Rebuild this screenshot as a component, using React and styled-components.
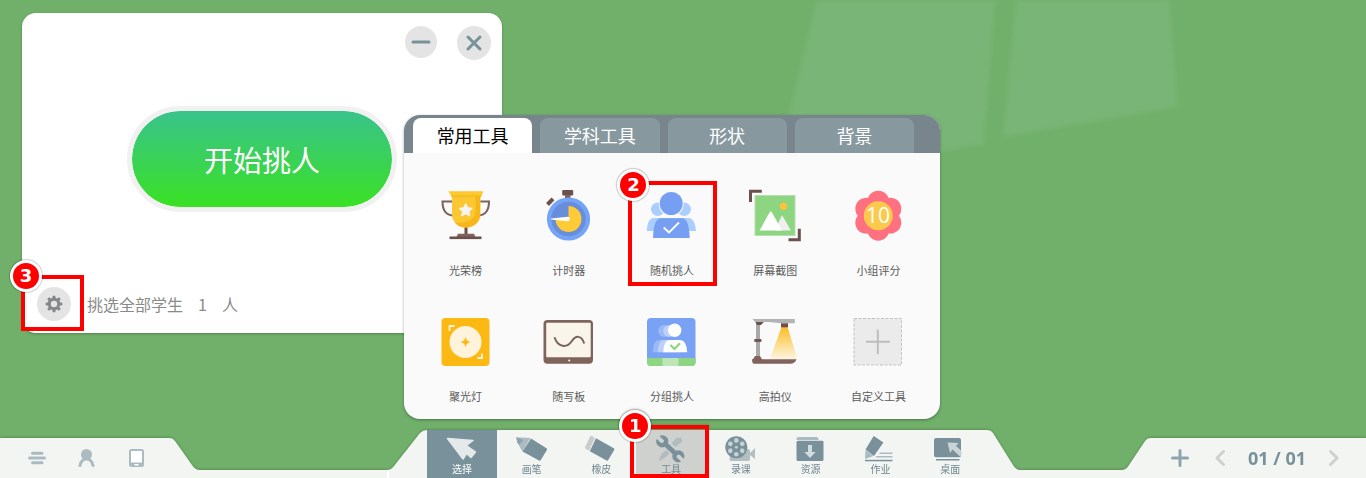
import React from "react";

import styled, { createGlobalStyle, css } from "styled-components";

const GlobalStyle = createGlobalStyle`
  :root {
    --board: #71b06b;
    --dock: #f3f5f2;
    --slate: #78919a;
    --slateLight: #abbbc1;
    --mark: #ff0000;
  }

  * {
    box-sizing: border-box;
  }

  body {
    margin: 0;
    font-family: "Noto Sans CJK SC", sans-serif;
  }

  button {
    border: 0;
    padding: 0;
    background: none;
    font: inherit;
    color: inherit;
    cursor: pointer;
  }

  svg {
    display: block;
  }
`;

const Page = styled.div`
  display: flex;
  flex-direction: column;
  min-height: 100vh;
  position: relative;
  overflow: hidden;
  background-color: var(--board);
`;

const Glare = styled.svg`
  position: absolute;
  top: 0;
  left: 780px;
  filter: blur(2px);
`;

const Canvas = styled.main`
  flex: 1;
  position: relative;
  min-height: 430px;
`;

/* numbered red frame laid over a control */
const Frame = styled.span`
  position: absolute;
  inset: ${(props) => props.$inset};
  border: 4px solid var(--mark);
  pointer-events: none;
`;

const Badge = styled.span`
  position: absolute;
  top: ${(props) => props.$top};
  left: -15px;
  display: flex;
  align-items: center;
  justify-content: center;
  width: 32px;
  height: 32px;
  border: 3px solid #fff;
  border-radius: 50%;
  background: var(--mark);
  box-shadow: 0 0 1px 1px rgba(0, 0, 0, 0.2);
  color: #fff;
  font: bold 18px/24px "DejaVu Sans", sans-serif;
`;

const Mark = ({ number, inset, top }) => (
  <Frame $inset={inset}>
    <Badge $top={top}>{number}</Badge>
  </Frame>
);

/* ---------- student picker window ---------- */

const Picker = styled.section`
  position: absolute;
  top: 13px;
  left: 22px;
  display: flex;
  flex-direction: column;
  width: 480px;
  height: 320px;
  padding: 13px 11px 12px 15px;
  border-radius: 14px;
  background: #fff;
  box-shadow: 0 1px 3px rgba(0, 0, 0, 0.25);
`;

const PickerHeader = styled.header`
  display: flex;
  justify-content: flex-end;
  gap: 20px;
`;

const RoundButton = styled.button`
  display: flex;
  align-items: center;
  justify-content: center;
  position: relative;
  width: ${(props) => props.$size || 34}px;
  height: ${(props) => props.$size || 34}px;
  border-radius: 50%;
  background: #e4e4e4;
`;

const PickerBody = styled.div`
  display: flex;
  flex: 1;
  align-items: center;
  justify-content: center;
  padding: 0 4px 30px 0;
`;

const StartButton = styled.button`
  width: 270px;
  height: 106px;
  border: 5px solid #f1f1f1;
  border-radius: 53px;
  background: linear-gradient(#39c38c, #3ae123) padding-box;
  color: #fff;
  font-size: 29px;
  line-height: 94px;
`;

const PickerFooter = styled.footer`
  display: flex;
  align-items: center;
  color: #8a8a8a;
  font-size: 16px;
`;

const Summary = styled.p`
  display: flex;
  gap: 15px;
  margin: 0 0 0 16px;
`;

/* ---------- toolbox ---------- */

const Toolbox = styled.section`
  position: absolute;
  top: 115px;
  left: 404px;
  width: 536px;
  border-radius: 16px;
  background: #fafafa;
  box-shadow: 0 1px 3px rgba(0, 0, 0, 0.35);
`;

const Tabs = styled.div`
  display: flex;
  gap: 8px;
  padding: 3px 26px 0 9px;
  border-radius: 16px 16px 0 0;
  background: #78858d;
`;

const Tab = styled.button`
  flex: 1;
  height: 35px;
  border-radius: 8px 8px 0 0;
  background: #87989f;
  color: #fff;
  font-size: 18px;
  line-height: 35px;

  ${(props) =>
    props.$active &&
    css`
      background: #fff;
      color: #000;
    `}
`;

const ToolGrid = styled.div`
  display: grid;
  grid-template-columns: repeat(5, 1fr);
  row-gap: 35px;
  padding: 34px 10px 15px;
`;

const Tool = styled.button`
  display: flex;
  flex-direction: column;
  align-items: center;
  gap: 19px;
  position: relative;
  color: #5a5a5a;
  font-size: 11px;
  line-height: 16px;
`;

/* ---------- dock ---------- */

const Dock = styled.footer`
  display: grid;
  grid-template-columns: 1fr auto 1fr;
  align-items: end;
  position: relative;
  background: linear-gradient(var(--dock), var(--dock)) bottom / 100% 8px
    no-repeat;
  filter: drop-shadow(0 -1px 1px rgba(0, 0, 0, 0.18));
`;

const DockSide = styled.div`
  display: flex;
  align-items: center;
  justify-self: ${(props) => props.$side};
  height: 40px;

  &::before,
  &::after {
    height: 40px;
    background: var(--dock);
  }
`;

const DockLeft = styled(DockSide)`
  &::after {
    content: "";
    width: 32px;
    clip-path: path("M0 0H2Q5 0 7 3L24 27Q27 32 32 32V40H0Z");
  }
`;

const DockRight = styled(DockSide)`
  &::before {
    content: "";
    width: 28px;
    clip-path: path("M28 0Q25 0 23 3L7 27Q4 32 0 32V40H28Z");
  }
`;

const DockItems = styled.div`
  display: flex;
  align-items: center;
  height: 100%;
  padding: 0 ${(props) => props.$right} 0 ${(props) => props.$left};
  background: var(--dock);
`;

const DockButton = styled.button`
  display: flex;
  align-items: center;
  justify-content: center;
  width: ${(props) => props.$width};
  height: 40px;
`;

const PageNumber = styled.span`
  margin: 0 8px;
  color: #78919a;
  font: 700 18px/24px "Open Sans", sans-serif;
  white-space: nowrap;
`;

const DockCenter = styled.nav`
  display: flex;
  margin-left: 41px;

  &::before {
    content: "";
    width: 40px;
    background: linear-gradient(90deg, #fff 0 2px, var(--dock) 2px);
    clip-path: path("M40 0Q36 0 33 3L7 36Q4 40 0 40V48H40Z");
  }

  &::after {
    content: "";
    width: 35px;
    background: var(--dock);
    clip-path: path("M0 0H2Q6 0 8 3L28 35Q31 40 35 40V48H0Z");
  }
`;

const DockTools = styled.div`
  display: grid;
  grid-template-columns: repeat(8, 1fr);
  width: 558px;
  height: 48px;
  background: var(--dock);
`;

const DockTool = styled.button`
  display: flex;
  flex-direction: column;
  align-items: center;
  position: relative;
  padding-top: 5px;
  background: ${(props) => props.$background || "none"};
  color: ${(props) => props.$color || "#6f8790"};
  font-size: 10px;
  line-height: 12px;
`;

/* ---------- toolbox drawings ---------- */

const Art = ({ children }) => (
  <svg width="56" height="56" viewBox="0 0 56 56" fill="none" aria-hidden="true">
    {children}
  </svg>
);

const Trophy = () => (
  <Art>
    <g stroke="#7a625f" strokeWidth="2">
      <path d="M14 14.5H4.5C4.5 22 7 28 15 28.5" />
      <path d="M42 14.5H51C51 22 48.500 28 40.500 28.500" />
    </g>
    <path d="M28 39V48" stroke="#6b514d" strokeWidth="3" />
    <path d="M10.500 4.500H45L42.500 9V27C42.500 35 36 40.500 28 40.500S14 35 14 27V9.500Z" fill="#fbc834" />
    <path d="M37.500 9H42V27C42 35 36 40.500 28 40.500C23 40.500 19 38.500 17 35.500C30 37 37.500 31 37.500 24Z" fill="#f7b718" />
    <path d="M10.500 4.500H45L43.500 9.500H14Z" fill="#fcc92f" />
    <path d="M13 9.200H43" stroke="#f3b21c" />
    <path d="M27.700 16.500L29.800 20.700L34.300 21.300L31 24.500L31.800 29L27.700 26.900L23.600 29L24.400 24.500L21.100 21.300L25.600 20.700Z" fill="#f4f4f2" stroke="#f4f4f2" strokeLinejoin="round" />
    <path d="M20 46.700H36L37.500 50H18.500Z" fill="#81625d" />
    <rect x="11.500" y="49.500" width="32" height="2.600" fill="#6b514d" />
  </Art>
);

const Timer = () => (
  <Art>
    <path d="M6.500 17.500L12 11.800" stroke="#6b514d" strokeWidth="4" />
    <rect x="21.200" y="3" width="11" height="5.500" rx="1" fill="#6b514d" />
    <rect x="24" y="8" width="5.500" height="4" fill="#81625d" />
    <circle cx="27.500" cy="32" r="21.600" fill="#74a4f7" />
    <circle cx="27.500" cy="32" r="17.300" fill="#678ddb" />
    <path d="M27.500 19A13 13 0 1 1 14.500 32H27.500Z" fill="#fecb36" />
    <path d="M10 31.400L26.500 29.700A2.300 2.300 0 0 1 26.500 34.300L10 32.600Z" fill="#fff" />
  </Art>
);

const RandomPick = () => (
  <Art>
    <g fill="#aaceff">
      <circle cx="13.700" cy="22.300" r="6.700" />
      <circle cx="40.200" cy="22.300" r="6.700" />
      <path d="M2.700 44Q3.500 31 10 31H44Q51 31 52 44Z" />
    </g>
    <circle cx="27.200" cy="16.700" r="12.400" fill="#fafafa" />
    <circle cx="27.200" cy="16.500" r="11.500" fill="#769ff3" />
    <path d="M9 51Q9.500 31.300 17 31.300H38Q45 31.300 45.700 51Z" fill="#769ff3" />
    <path d="M19.700 40.500L25 45.500L35 35.500" stroke="#fff" strokeWidth="1.800" />
  </Art>
);

const Screenshot = () => (
  <Art>
    <path d="M3.500 15V4.300H14.800M52.300 41.700V52.700H41.500" stroke="#6b514d" strokeWidth="3" />
    <rect x="8" y="8.500" width="40" height="40" fill="#8dd581" stroke="#b5dfad" />
    <circle cx="36.500" cy="19.300" r="3.700" fill="#fcc338" />
    <path d="M28 43.500L35 28L44 43.500Z" fill="#efefef" />
    <path d="M12.500 43.500L22.500 25.500Q23.800 23.500 25 25.500L35 43.500Z" fill="#fff" />
  </Art>
);

const Score = () => (
  <Art>
    <g fill="#ff7080">
      {[0, 60, 120, 180, 240, 300].map((angle) => (
        <circle key={angle} cx="28.300" cy="14.500" r="10.800" transform={`rotate(${angle} 28.300 28.700)`} />
      ))}
      <circle cx="28.300" cy="28.700" r="15" />
    </g>
    <circle cx="28.300" cy="28.700" r="14.500" fill="#fbca4b" />
    <text x="28" y="36" fill="#fff" fontFamily="Liberation Sans Narrow, Open Sans, sans-serif" fontSize="21" fontWeight="400" textAnchor="middle">
      10
    </text>
  </Art>
);

const Spotlight = () => (
  <Art>
    <rect x="3.500" y="5" width="48" height="48" rx="4" fill="#fcb813" />
    <circle cx="27.500" cy="29" r="16" fill="#fff3db" />
    <path d="M27.500 23.500Q28 28.500 33 29Q28 29.500 27.500 34.500Q27 29.500 22 29Q27 28.500 27.500 23.500Z" fill="#fcb813" />
    <path d="M11.500 18V13H16.500M44 40.500V45H39.500" stroke="#fff3db" strokeWidth="1.800" />
  </Art>
);

const Board = () => (
  <Art>
    <rect x="2.500" y="7" width="49.500" height="43.700" rx="4" fill="#7e645b" />
    <rect x="5.200" y="9.700" width="44.500" height="34.600" rx="1" fill="#f9f5eb" />
    <path d="M13.500 24.300C17 35 26 35 30.500 28.500S40.500 22 43.200 30.500" stroke="#7a625f" strokeWidth="2" />
    <circle cx="28.200" cy="47.400" r="1" fill="#fff" />
  </Art>
);

const personBody = "M19.300 39.300Q19.500 27 26 27H36Q42.500 27 43.200 39.300Z";

const GroupPick = () => (
  <Art>
    <rect x="3" y="5" width="48.500" height="48" rx="4" fill="#79a2f4" />
    <path d="M3 45H51.500V49A4 4 0 0 1 47.500 53H7A4 4 0 0 1 3 49Z" fill="#8dd581" />
    <rect x="18.500" y="45" width="16" height="8" fill="#bde6b5" />
    {[-10.5, -5.5].map((shift, index) => (
      <g key={shift} fill={index ? "#bdd0f9" : "#9bb9f7"} transform={`translate(${shift} 0)`}>
        <circle cx="30.700" cy="18" r="6" />
        <path d={personBody} />
      </g>
    ))}
    <circle cx="30.700" cy="17.300" r="6.700" fill="#fff" />
    <path d={personBody} fill="#fff" />
    <path d="M26.500 32L30.500 36L36 30.300" stroke="#8dd581" strokeWidth="2.200" />
  </Art>
);

const Visualizer = () => (
  <Art>
    <defs>
      <linearGradient id="beam" x1="0" y1="0" x2="0" y2="1">
        <stop offset="0" stopColor="#fdbd24" />
        <stop offset="1" stopColor="#fef6e4" />
      </linearGradient>
    </defs>
    <path d="M34.500 14H40.500L50.500 46.300H23Z" fill="url(#beam)" />
    <rect x="9" y="9" width="4" height="35" fill="#a9a9a9" />
    <path d="M5.500 6H47.800V10.300H34L22 9H8Z" fill="#b3b3b3" />
    <path d="M8.500 9H16.800L14 12H10Z" fill="#6b514d" />
    <rect x="7.200" y="26" width="7.300" height="3" rx="1" fill="#6b5a57" />
    <path d="M8 43H13L15.500 47H5.500Z" fill="#81625d" />
    <rect x="34" y="10.300" width="7" height="4" fill="#6b514d" />
    <path d="M5 46.300H49.500Q48 50.700 43 50.700H7Q5 50.700 5 46.300Z" fill="#81625d" />
  </Art>
);

const Custom = () => (
  <Art>
    <rect x="4" y="5.500" width="47.500" height="46.500" fill="#ebebeb" stroke="#c3c3c3" strokeDasharray="3 1.500" />
    <path d="M16 28.700H40M27.800 16.500V41" stroke="#bdbdbd" strokeWidth="2" />
  </Art>
);

/* ---------- dock drawings ---------- */

const Glyph = ({ children }) => (
  <svg width="36" height="28" viewBox="0 0 36 28" fill="#78919a" aria-hidden="true">
    {children}
  </svg>
);

const CursorGlyph = () => (
  <Glyph>
    <path d="M3.500 3.500L29 5.500L22.500 10.500L31.500 17L27 22.500L22.500 18.500L19 24Z" fill="#e4e9ea" stroke="#e4e9ea" strokeWidth="1.500" strokeLinejoin="round" />
  </Glyph>
);

const PencilGlyph = () => (
  <Glyph>
    <path d="M2.300 2.300L16.400 3L8.500 16.500L3.500 8Z" fill="#abbbc1" />
    <path d="M17 3.500L32.500 13.200Q33.500 14 32.900 15L26.800 25Q26 26 25 25.500L8.500 16.500Z" />
    <path d="M2.300 2.300L9 5L5.500 9.500L3.500 8Z" fill="#8da2aa" />
  </Glyph>
);

const EraserGlyph = () => (
  <Glyph>
    <path d="M8.500 .8L12 3L6 15.700L2.500 13.500Q1.700 13 2.200 12L7 1.500Q7.500 .3 8.500 .8Z" fill="#c8cccb" />
    <path d="M13 3.200L30.800 13.300Q31.800 14 31.200 15L25.200 25Q24.500 26 23.500 25.500L6.800 16.200Z" />
  </Glyph>
);

const WrenchGlyph = () => (
  <Glyph>
    <path d="M23 3L28 2.500L29.500 6.500L22.500 12L18.500 8.500ZM14 15L16.500 18.500L12 22.500L6 26Q7 19 11.500 16.500Z" fill="#b1bcbf" />
    <path
      d="M-16.660-2H-11.500a2 2 0 0 1 0 4H-16.660A6 6 0 0 0-5.500 2.400H5.500A6 6 0 0 0 16.660 2H11.500a2 2 0 0 1 0-4H16.660A6 6 0 0 0 5.500-2.400H-5.500A6 6 0 0 0-16.660-2Z"
      transform="translate(17.300 13.800) rotate(43)"
    />
  </Glyph>
);

const RecordGlyph = () => (
  <Glyph>
    <path d="M8 14H25Q27 14 27 16V18L32 13V24L27 20V24Q27 26 25 26H8Q6.500 26 6.500 24Z" fill="#b3bfc3" />
    <circle cx="13.300" cy="12.300" r="11" />
    <g fill="#c9d3d6">
      <circle cx="13.300" cy="12.300" r="1.400" />
      {[0, 60, 120, 180, 240, 300].map((angle) => (
        <circle key={angle} cx="13.300" cy="5.400" r="2.300" transform={`rotate(${angle} 13.300 12.300)`} />
      ))}
    </g>
  </Glyph>
);

const ResourceGlyph = () => (
  <Glyph>
    <path d="M3.500 5V4Q3.500 2 5.500 2H23.500Q25.500 2 25.500 5Z" fill="#abbbc1" />
    <rect x="3.500" y="5.800" width="27" height="20.200" rx="1.500" />
    <path d="M15 10H19V17H22.700L17 23L11.300 17H15Z" fill="#d3dcdf" />
  </Glyph>
);

const HomeworkGlyph = () => (
  <Glyph>
    <path d="M11.700 1L21.400 7.500L12 21L3.500 14.500Z" />
    <path d="M3.500 15L11.500 21L3 24Z" fill="#abbbc1" />
    <path d="M18 17.500H30.500V19H17ZM14.500 21H30.500V22.500H13Z" fill="#abbbc1" />
    <rect x="3" y="24.800" width="27.500" height="1.500" />
  </Glyph>
);

const DesktopGlyph = () => (
  <Glyph>
    <rect x="2" y="3" width="27" height="19.300" rx="2" />
    <path d="M15.500 7.500L26.500 8L24 11L29.500 16V20L28 21.500L20.500 14.500L18 18Z" fill="#c9d3d6" />
    <rect x="4" y="24" width="23.500" height="1.500" />
  </Glyph>
);

const Stroke = ({ size = 24, color = "#78919a", width = 3, d }) => (
  <svg width={size} height={size} viewBox="0 0 24 24" fill="none" stroke={color} strokeWidth={width} strokeLinecap="round" strokeLinejoin="round" aria-hidden="true">
    <path d={d} />
  </svg>
);

const Gear = () => (
  <svg width="18" height="18" viewBox="-9 -9 18 18" aria-hidden="true">
    <g fill="#84878b">
      {[0, 45, 90, 135, 180, 225, 270, 315].map((angle) => (
        <path key={angle} d="M-1.800-5L-1.300-8.300H1.300L1.800-5Z" transform={`rotate(${angle})`} />
      ))}
    </g>
    <circle r="4.700" fill="none" stroke="#84878b" strokeWidth="3" />
  </svg>
);

const Person = () => (
  <svg width="24" height="24" viewBox="0 0 24 24" fill="none" aria-hidden="true">
    <path d="M5 19.500C6 15 8.500 13 11.500 13S17 15 18 19.500" stroke="#abbbc1" strokeWidth="3" strokeLinecap="round" />
    <circle cx="11.500" cy="8.500" r="5.500" fill="#abbbc1" />
  </svg>
);

const Tablet = () => (
  <svg width="24" height="24" viewBox="0 0 24 24" aria-hidden="true">
    <rect x="4" y="3" width="15" height="18" rx="2.500" fill="#abbbc1" />
    <rect x="6" y="5" width="11" height="11.500" rx=".5" fill="#fff" />
    <rect x="9.500" y="18" width="4" height="1.500" fill="#fff" />
  </svg>
);

const tabs = ["常用工具", "学科工具", "形状", "背景"];

const tools = [
  { name: "光荣榜", icon: Trophy },
  { name: "计时器", icon: Timer },
  { name: "随机挑人", icon: RandomPick, mark: 2 },
  { name: "屏幕截图", icon: Screenshot },
  { name: "小组评分", icon: Score },
  { name: "聚光灯", icon: Spotlight },
  { name: "随写板", icon: Board },
  { name: "分组挑人", icon: GroupPick },
  { name: "高拍仪", icon: Visualizer },
  { name: "自定义工具", icon: Custom },
];

const dockTools = [
  { name: "选择", icon: CursorGlyph, background: "#78919a", color: "#fff" },
  { name: "画笔", icon: PencilGlyph },
  { name: "橡皮", icon: EraserGlyph },
  { name: "工具", icon: WrenchGlyph, background: "#cfd1ce", mark: 1 },
  { name: "录课", icon: RecordGlyph },
  { name: "资源", icon: ResourceGlyph },
  { name: "作业", icon: HomeworkGlyph },
  { name: "桌面", icon: DesktopGlyph },
];

const App = () => {
  return (
    <Page>
      <GlobalStyle />
      <Glare width="420" height="160" viewBox="0 0 420 160" fill="#79b576" aria-hidden="true">
        <path d="M38-5H216L204 144L100 162L0 150Z" />
        <path d="M236-5H389L398 107L223 137Z" />
      </Glare>

      <Canvas>
        <Picker>
          <PickerHeader>
            <RoundButton $size={32} aria-label="最小化">
              <Stroke d="M4 12H20" />
            </RoundButton>
            <RoundButton aria-label="关闭">
              <Stroke d="M6 6L18 18M18 6L6 18" />
            </RoundButton>
          </PickerHeader>
          <PickerBody>
            <StartButton>开始挑人</StartButton>
          </PickerBody>
          <PickerFooter>
            <RoundButton aria-label="设置">
              <Gear />
              <Mark number={3} inset="-12px -13px -10px -16px" top="-19px" />
            </RoundButton>
            <Summary>
              <span>挑选全部学生</span>
              <span>1</span>
              <span>人</span>
            </Summary>
          </PickerFooter>
        </Picker>

        <Toolbox>
          <Tabs role="tablist">
            {tabs.map((tab, index) => (
              <Tab key={tab} role="tab" aria-selected={index === 0} $active={index === 0}>
                {tab}
              </Tab>
            ))}
          </Tabs>
          <ToolGrid>
            {tools.map(({ name, icon: Icon, mark }) => (
              <Tool key={name}>
                <Icon />
                {name}
                {mark && <Mark number={mark} inset="-6px 7px -8px 8px" top="-16px" />}
              </Tool>
            ))}
          </ToolGrid>
        </Toolbox>
      </Canvas>

      <Dock>
        <DockLeft $side="start">
          <DockItems $left="12px" $right="6px">
            <DockButton $width="50px" aria-label="菜单">
              <Stroke color="#abbbc1" d="M7.500 7.300H17M4.500 12H19.500M7.500 16.700H17" />
            </DockButton>
            <DockButton $width="50px" aria-label="用户">
              <Person />
            </DockButton>
            <DockButton $width="50px" aria-label="设备">
              <Tablet />
            </DockButton>
          </DockItems>
        </DockLeft>

        <DockCenter>
          <DockTools>
            {dockTools.map(({ name, icon: Icon, background, color, mark }) => (
              <DockTool key={name} $background={background} $color={color}>
                <Icon />
                {name}
                {mark && <Mark number={mark} inset="-5px -3px 0 -6px" top="-19px" />}
              </DockTool>
            ))}
          </DockTools>
        </DockCenter>

        <DockRight $side="end">
          <DockItems $left="10px" $right="12px">
            <DockButton $width="40px" aria-label="新建页">
              <Stroke color="#8fa5ac" d="M12 4.500V19.500M4.500 12H19.500" />
            </DockButton>
            <DockButton $width="40px" aria-label="上一页">
              <Stroke color="#cfd1cf" d="M15.500 5.500L9 12L15.500 18.500" />
            </DockButton>
            <PageNumber>01 / 01</PageNumber>
            <DockButton $width="40px" aria-label="下一页">
              <Stroke color="#cfd1cf" d="M8.500 5.500L15 12L8.500 18.500" />
            </DockButton>
          </DockItems>
        </DockRight>
      </Dock>
    </Page>
  );
};

export default App;
